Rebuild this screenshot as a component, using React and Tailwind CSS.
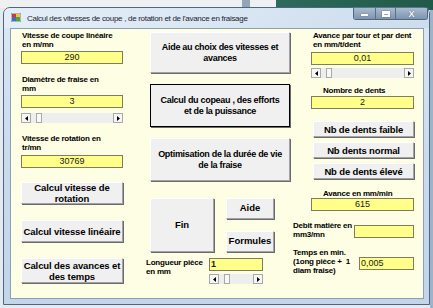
import React from 'react'

const SANS = "font-['Liberation_Sans',Arial,sans-serif]"

function Label({ lines, className = '' }) {
  return (
    <div className={`text-[8px] leading-[9px] tracking-[-0.2px] font-bold text-black ${className}`}>
      {lines.map((l) => (
        <div key={l} className="whitespace-pre">{l}</div>
      ))}
    </div>
  )
}

function Box({ value, left, className = '' }) {
  return (
    <div
      className={`h-[13px] border border-[#7d7d62] bg-[#ffff8a] text-[9px] leading-[11px] text-[#1a1a1a] flex items-center ${left ? 'justify-start pl-[1px]' : 'justify-center'} ${className}`}
    >
      {value}
    </div>
  )
}

function Arrow({ dir }) {
  return (
    <div className="w-[10px] h-full border border-[#a9a9a9] bg-[#f6f6f6] flex items-center justify-center">
      <svg width="3" height="5" viewBox="0 0 3 5">
        {dir === 'l' ? <polygon points="3,0 0,2.5 3,5" fill="#000" /> : <polygon points="0,0 3,2.5 0,5" fill="#000" />}
      </svg>
    </div>
  )
}

function Scroll({ className = '' }) {
  return (
    <div className={`h-[10px] flex bg-[#eeeeee] ${className}`}>
      <Arrow dir="l" />
      <div className="ml-[5px] w-[6px] h-full border border-[#a9a9a9] bg-[#f8f8f8]" />
      <div className="flex-1" />
      <Arrow dir="r" />
    </div>
  )
}

function Btn({ children, focus, className = '' }) {
  return (
    <div
      className={`flex flex-col items-center justify-center text-center font-bold text-black bg-[#f0f0f0] border shadow-[1px_1px_0_#6b6b6b] whitespace-nowrap ${
        focus ? 'border-black' : 'border-t-white border-l-white border-r-[#a3a3a3] border-b-[#a3a3a3]'
      } ${className}`}
    >
      {children}
    </div>
  )
}

export default function App() {
  return (
    <div className={`relative w-[433px] h-[308px] overflow-hidden bg-[#e4eaf0] ${SANS}`}>
      {/* desktop behind the window */}
      <div className="absolute left-0 top-0 w-[276px] h-[8px] bg-[#eef0f2]" />
      <div className="absolute left-[276px] top-0 w-[157px] h-[10px] bg-gradient-to-r from-[#2f6b5a] to-[#1f5a48]" />
      <div className="absolute left-[242px] top-0 w-[8px] h-[28px] bg-[#6f84a0] opacity-70" />
      <div className="absolute left-[430px] top-[10px] w-[3px] h-[298px] bg-[#9fb3c8]" />

      {/* window */}
      <div className="absolute left-[3px] top-[7px] w-[427px] h-[298px] rounded-t-[7px] border border-[#4c6684] bg-gradient-to-b from-[#dce8f4] via-[#cadbec] to-[#c2d5e9] flex flex-col">
        {/* title bar */}
        <div className="h-[20px] flex items-start relative bg-gradient-to-r from-[#e6eff8]/80 via-[#d9e6f3]/60 to-[#b9cfe3]/40 rounded-t-[6px]">
          <svg className="mt-[5px] ml-[7px]" width="10" height="9" viewBox="0 0 10 9">
            <rect x="0" y="0" width="10" height="9" fill="#f3f3f3" stroke="#6b7a8c" strokeWidth="1" />
            <rect x="1" y="1" width="4" height="3" fill="#d9342b" />
            <rect x="5" y="1" width="4" height="3" fill="#f2c230" />
            <rect x="1" y="4" width="4" height="4" fill="#3a6fc4" />
            <rect x="5" y="4" width="4" height="4" fill="#4aa540" />
          </svg>
          <div className="ml-[6px] mt-[5px] text-[8px] tracking-[-0.3px] leading-[11px] text-[#1b2430] whitespace-nowrap">
            Calcul des vitesses de coupe , de rotation et de l'avance en fraisage
          </div>
          <div className="ml-auto mr-[1px] flex h-[12px] rounded-b-[3px] overflow-hidden border border-t-0 border-[#4f6580] shadow-[0_0_1px_#ffffff]">
            <div className="w-[22px] bg-gradient-to-b from-[#a9bbd0] to-[#7e95af] border-r border-[#56708e] flex items-center justify-center">
              <div className="w-[7px] h-[2px] mt-[3px] bg-white shadow-[0_0_1px_#2a3a4e]" />
            </div>
            <div className="w-[20px] bg-gradient-to-b from-[#a9bbd0] to-[#7e95af] border-r border-[#56708e] flex items-center justify-center">
              <div className="w-[8px] h-[6px] border-2 border-t-[3px] border-white shadow-[0_0_1px_#2a3a4e]" />
            </div>
            <div className="w-[31px] bg-gradient-to-b from-[#a9bbd0] to-[#7e95af] flex items-center justify-center">
              <span className="text-white font-bold text-[9px] leading-[10px] [text-shadow:0_0_1px_#2a3a4e]">X</span>
            </div>
          </div>
        </div>

        {/* client area */}
        <div className="ml-[6px] w-[414px] h-[271px] border border-[#8c9fb5] bg-[#fefee4] flex">
          {/* left column */}
          <div className="ml-[10px] w-[102px] flex flex-col">
            <Label className="mt-[2px] ml-[1px]" lines={['Vitesse de coupe linéaire', 'en m/mn']} />
            <Box className="mt-[2px]" value="290" />
            <Label className="mt-[11px] ml-[1px]" lines={['Diamètre de fraise en', 'mm']} />
            <Box className="mt-[2px]" value="3" />
            <Scroll className="mt-[5px]" />
            <Label className="mt-[11px] ml-[1px]" lines={['Vitesse de rotation en', 'tr/mn']} />
            <Box className="mt-[3px]" value="30769" />
            <Btn className="mt-[14px] h-[22px] text-[9.5px] leading-[11px] tracking-[-0.1px]">
              <div>Calcul vitesse de</div>
              <div>rotation</div>
            </Btn>
            <Btn className="mt-[16px] h-[22px] text-[9.5px] leading-[11px] tracking-[-0.1px]">
              <div>Calcul vitesse linéaire</div>
            </Btn>
            <Btn className="mt-[16px] h-[25px] text-[9.5px] leading-[11px] tracking-[-0.1px]">
              <div>Calcul des avances et</div>
              <div>des temps</div>
            </Btn>
          </div>

          {/* middle column */}
          <div className="ml-[22px] w-[146px] flex flex-col">
            <Btn className="ml-[5px] w-[140px] mt-[3px] h-[41px] text-[9px] leading-[11px] tracking-[-0.3px]">
              <div>Aide au choix des vitesses et</div>
              <div>avances</div>
            </Btn>
            <Btn focus className="ml-[5px] w-[140px] mt-[11px] h-[43px] text-[9px] leading-[11px] tracking-[-0.3px]">
              <div>Calcul du copeau , des efforts</div>
              <div>et de la puissance</div>
            </Btn>
            <Btn className="ml-[5px] w-[140px] mt-[11px] h-[43px] text-[9px] leading-[11px] tracking-[-0.3px]">
              <div>Optimisation de la durée de vie</div>
              <div>de la fraise</div>
            </Btn>
            <div className="ml-[5px] mt-[17px] h-[54px] flex gap-[12px]">
              <Btn className="w-[64px] h-full text-[9.5px]">Fin</Btn>
              <div className="w-[48px] flex flex-col justify-between">
                <Btn className="h-[21px] text-[9.5px]">Aide</Btn>
                <Btn className="h-[21px] text-[9.5px]">Formules</Btn>
              </div>
            </div>
            <div className="mt-[6px] flex">
              <Label className="ml-[1px] w-[63px]" lines={['Longueur pièce', 'en mm']} />
              <div className="w-[54px] flex flex-col">
                <Box value="1" left className="font-bold" />
                <Scroll className="mt-[3px]" />
              </div>
            </div>
          </div>

          {/* right column */}
          <div className="ml-[2px] w-[121px] flex flex-col">
            <Label className="mt-[2px] ml-[20px]" lines={['Avance par tour et par dent', 'en mm/t/dent']} />
            <Box className="mt-[3px] ml-[18px] w-[103px]" value="0,01" />
            <Scroll className="mt-[3px] ml-[18px] w-[103px]" />
            <Label className="mt-[8px] ml-[30px]" lines={['Nombre de dents']} />
            <Box className="mt-[1px] ml-[18px] w-[103px]" value="2" />
            <Btn className="mt-[12px] ml-[20px] w-[101px] h-[16px] text-[9.5px] leading-[11px] tracking-[-0.15px]">Nb de dents faible</Btn>
            <Btn className="mt-[5px] ml-[20px] w-[101px] h-[16px] text-[9.5px] leading-[11px] tracking-[-0.15px]">Nb dents normal</Btn>
            <Btn className="mt-[5px] ml-[20px] w-[101px] h-[16px] text-[9.5px] leading-[11px] tracking-[-0.15px]">Nb de dents élevé</Btn>
            <Label className="mt-[10px] ml-[30px]" lines={['Avance en mm/min']} />
            <Box className="ml-[18px] w-[103px]" value="615" />
            <div className="mt-[10px] flex items-start">
              <Label className="w-[61px]" lines={['Debit matière en', 'mm3/mn']} />
              <Box className="mt-[4px] w-[60px]" value="" />
            </div>
            <div className="mt-[9px] flex items-start">
              <Label className="w-[66px]" lines={['Temps en min.', '(1ong pièce +  1', 'diam fraise)']} />
              <Box className="mt-[9px] w-[55px]" value="0,005" left />
            </div>
          </div>
        </div>
      </div>
    </div>
  )
}
